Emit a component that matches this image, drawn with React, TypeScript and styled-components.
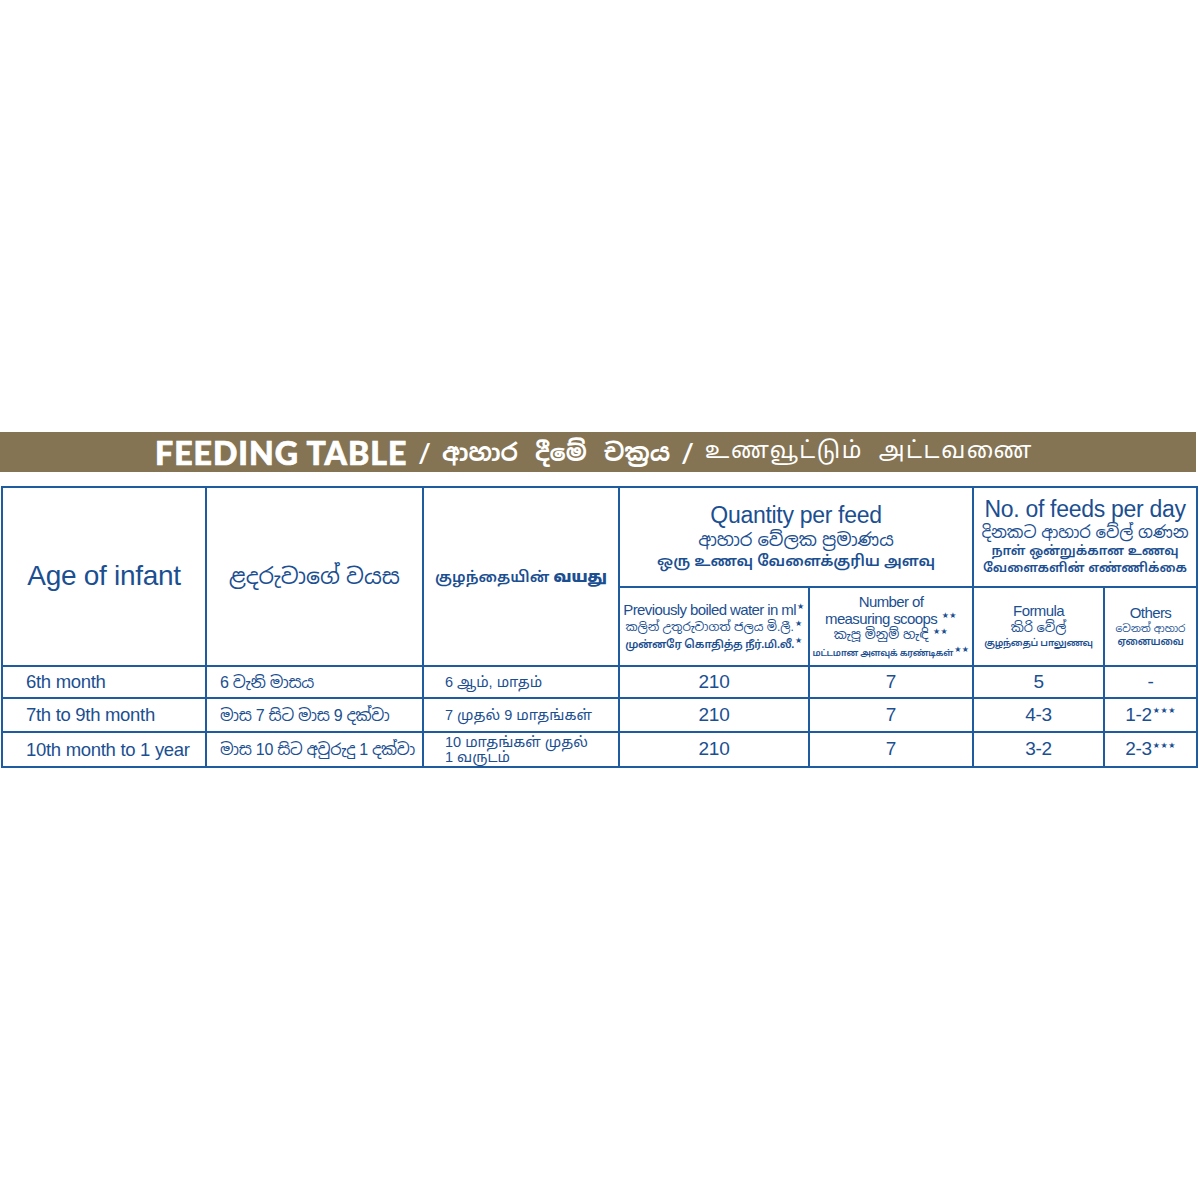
import React from "react";
import styled, { createGlobalStyle } from "styled-components";

const stack = `"Liberation Sans", "Noto Sans Sinhala", "Noto Sans Tamil", Arial, sans-serif`;

const GlobalStyle = createGlobalStyle`
  html, body {
    margin: 0;
    padding: 0;
    background: #ffffff;
  }
  body {
    font-family: ${stack};
  }
`;

const Page = styled.div`
  min-height: 1200px;
  display: flex;
  flex-direction: column;
  justify-content: center;
  box-sizing: border-box;
`;

const TitleBar = styled.div`
  height: 40px;
  width: 1196px;
  background: #857453;
  display: flex;
  align-items: center;
  justify-content: center;
  padding-right: 8px;
  box-sizing: border-box;
  color: #ffffff;
  gap: 8px;
  white-space: nowrap;
`;

const TitleMain = styled.span`
  font-family: Lato, "Open Sans", sans-serif;
  font-weight: 900;
  font-size: 32px;
  letter-spacing: 1px;
  -webkit-text-stroke: 0.7px #ffffff;
`;

const TitleSi = styled.span`
  font-family: "Noto Sans Sinhala", "Liberation Sans", sans-serif;
  font-weight: 700;
  font-size: 24px;
  word-spacing: 5px;
`;

const TitleSlash = styled.span`
  font-family: Lato, sans-serif;
  font-weight: 700;
  font-size: 27px;
  margin: 0 3px;
`;

const TitleTa = styled.span`
  font-family: "Noto Sans Tamil", "Liberation Sans", sans-serif;
  font-weight: 400;
  font-size: 23px;
  letter-spacing: 1.6px;
  word-spacing: 8px;
`;

const Table = styled.table`
  margin: 14px 0 0 1px;
  width: 1195px;
  border-collapse: collapse;
  table-layout: fixed;
  color: #1b4f91;
  border: 2px solid #1f5c9f;
  font-family: ${stack};
`;

const Cell = styled.td<{ $h?: number; $size?: number; $align?: string }>`
  border: 2px solid #1f5c9f;
  padding: 0 2px;
  height: ${(p) => (p.$h ? `${p.$h}px` : "auto")};
  font-size: ${(p) => (p.$size ? `${p.$size}px` : "18px")};
  text-align: ${(p) => p.$align || "center"};
  vertical-align: middle;
  line-height: 1.1;
  letter-spacing: -0.3px;
  white-space: nowrap;
  overflow: hidden;
`;

const Big = styled.div`
  font-size: 23px;
  line-height: 1.1;
  letter-spacing: -0.3px;
`;

const Mid = styled.div<{ $size?: number }>`
  font-size: ${(p) => (p.$size ? `${p.$size}px` : "18px")};
  line-height: 1.25;
  letter-spacing: 0;
`;

const Small = styled.div<{ $size?: number }>`
  font-size: ${(p) => (p.$size ? `${p.$size}px` : "15px")};
  line-height: 1.3;
  font-weight: 600;
  letter-spacing: 0;
`;

const Sub = styled.div<{ $size?: number }>`
  font-size: ${(p) => (p.$size ? `${p.$size}px` : "15px")};
  line-height: 1.12;
  letter-spacing: -0.6px;
`;

const SiSub = styled.div<{ $size?: number }>`
  font-size: ${(p) => (p.$size ? `${p.$size}px` : "12px")};
  line-height: 1.3;
  letter-spacing: 0;
`;

const Tiny = styled.div<{ $size?: number }>`
  font-size: ${(p) => (p.$size ? `${p.$size}px` : "11px")};
  line-height: 1.3;
  font-weight: 600;
  letter-spacing: -0.3px;
`;

const Star = styled.sup`
  font-family: "DejaVu Sans", sans-serif;
  font-size: 8px;
  letter-spacing: 0.5px;
  margin-left: 1px;
`;

const RowText = styled.span<{ $indent: number }>`
  display: inline-block;
  padding-left: ${(p) => p.$indent}px;
  vertical-align: middle;
`;

const SiRow = styled(RowText)`
  font-size: 16px;
  letter-spacing: -0.3px;
`;

const TaRow = styled(RowText)`
  font-size: 14.5px;
  line-height: 1.02;
  letter-spacing: 0;
`;

const rows = [
  {
    en: "6th month",
    si: "6 වැනි මාසය",
    ta: ["6 ஆம், மாதம்"],
    water: "210",
    scoops: "7",
    formula: "5",
    others: "-",
    stars: false,
    h: 30,
  },
  {
    en: "7th to 9th month",
    si: "මාස 7 සිට මාස 9 දක්වා",
    ta: ["7 முதல் 9 மாதங்கள்"],
    water: "210",
    scoops: "7",
    formula: "4-3",
    others: "1-2",
    stars: true,
    h: 32,
  },
  {
    en: "10th month to 1 year",
    si: "මාස 10 සිට අවුරුදු 1 දක්වා",
    ta: ["10 மாதங்கள் முதல்", "1 வருடம்"],
    water: "210",
    scoops: "7",
    formula: "3-2",
    others: "2-3",
    stars: true,
    h: 33,
  },
];

export default function App() {
  return (
    <Page>
      <GlobalStyle />
      <TitleBar>
        <TitleMain>FEEDING TABLE</TitleMain>
        <TitleSlash>/</TitleSlash>
        <TitleSi>ආහාර දීමේ චක්‍රය</TitleSi>
        <TitleSlash>/</TitleSlash>
        <TitleTa>உணவூட்டும் அட்டவணை</TitleTa>
      </TitleBar>
      <Table>
        <colgroup>
          <col style={{ width: 204 }} />
          <col style={{ width: 217 }} />
          <col style={{ width: 196 }} />
          <col style={{ width: 190 }} />
          <col style={{ width: 164 }} />
          <col style={{ width: 131 }} />
          <col style={{ width: 93 }} />
        </colgroup>
        <tbody>
          <tr>
            <Cell rowSpan={2} $size={28}>Age of infant</Cell>
            <Cell rowSpan={2}>
              <Mid $size={22}>ළදරුවාගේ වයස</Mid>
            </Cell>
            <Cell rowSpan={2}>
              <Small $size={15}>
                குழந்தையின் <b>வயது</b>
              </Small>
            </Cell>
            <Cell colSpan={2} $h={98}>
              <Big>Quantity per feed</Big>
              <Mid>ආහාර වේලක ප්‍රමාණය</Mid>
              <Small>ஒரு உணவு வேளைக்குரிய அளவு</Small>
            </Cell>
            <Cell colSpan={2} $h={98}>
              <Big>No. of feeds per day</Big>
              <Mid $size={16.5}>දිනකට ආහාර වේල් ගණන</Mid>
              <Small $size={13}>நாள் ஒன்றுக்கான உணவு</Small>
              <Small $size={13}>வேளைகளின் எண்ணிக்கை</Small>
            </Cell>
          </tr>
          <tr>
            <Cell $h={77}>
              <Sub>
                Previously boiled water in ml<Star>★</Star>
              </Sub>
              <SiSub>
                කලින් උතුරුවාගත් ජලය මි.ලී.<Star>★</Star>
              </SiSub>
              <Tiny>
                முன்னரே கொதித்த நீர்.மி.லீ.<Star>★</Star>
              </Tiny>
            </Cell>
            <Cell $h={77}>
              <Sub>Number of</Sub>
              <Sub>
                measuring scoops <Star>★★</Star>
              </Sub>
              <SiSub $size={13}>
                කැපූ මිනුම් හැඳි <Star>★★</Star>
              </SiSub>
              <Tiny $size={9}>
                மட்டமான அளவுக் கரண்டிகள்<Star>★★</Star>
              </Tiny>
            </Cell>
            <Cell $h={77}>
              <Sub>Formula</Sub>
              <SiSub $size={13}>කිරි වේල්</SiSub>
              <Tiny $size={9.5}>குழந்தைப் பாலுணவு</Tiny>
            </Cell>
            <Cell $h={77}>
              <Sub>Others</Sub>
              <SiSub $size={10.5}>වෙනත් ආහාර</SiSub>
              <Tiny $size={10}>ஏனையவை</Tiny>
            </Cell>
          </tr>
          {rows.map((r) => (
            <tr key={r.en}>
              <Cell $h={r.h} $align="left" $size={18.5}>
                <RowText $indent={21}>{r.en}</RowText>
              </Cell>
              <Cell $h={r.h} $align="left">
                <SiRow $indent={11}>{r.si}</SiRow>
              </Cell>
              <Cell $h={r.h} $align="left">
                <TaRow $indent={19}>
                  {r.ta.map((t) => (
                    <div key={t}>{t}</div>
                  ))}
                </TaRow>
              </Cell>
              <Cell $h={r.h} $size={19}>{r.water}</Cell>
              <Cell $h={r.h} $size={19}>{r.scoops}</Cell>
              <Cell $h={r.h} $size={19}>{r.formula}</Cell>
              <Cell $h={r.h} $size={19}>
                {r.others}
                {r.stars && <Star>★★★</Star>}
              </Cell>
            </tr>
          ))}
        </tbody>
      </Table>
    </Page>
  );
}
